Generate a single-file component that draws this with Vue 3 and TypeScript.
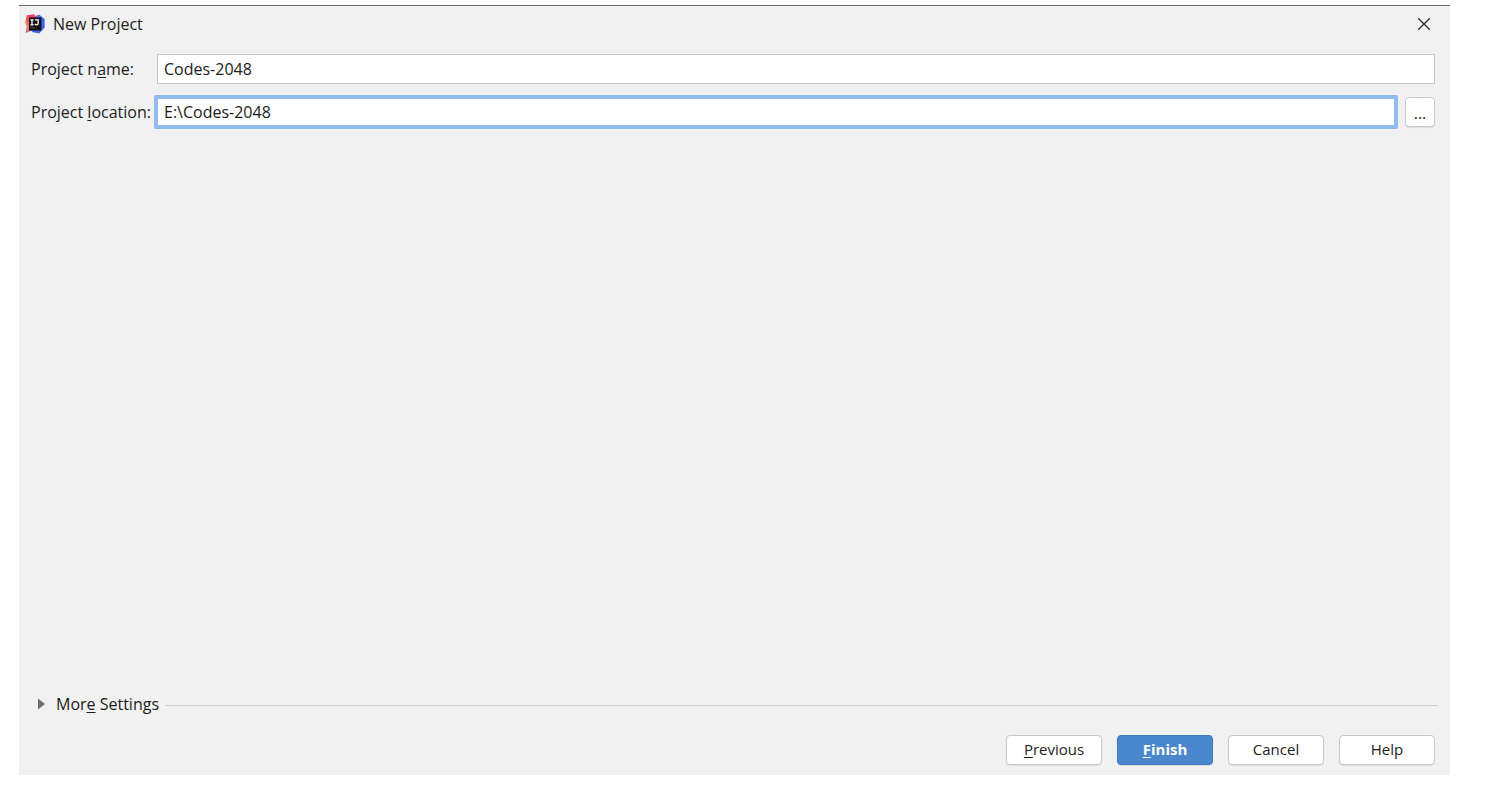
<script setup lang="ts">
import { ref } from 'vue'

const projectName = ref('Codes-2048')
const projectLocation = ref('E:\\Codes-2048')
</script>

<template>
  <div class="screen">
    <main class="dialog">
      <header class="titlebar">
        <svg class="logo" viewBox="0 0 20 20" aria-hidden="true">
          <defs>
            <linearGradient id="warm" x1="0" y1="1" x2="0.6" y2="0">
              <stop offset="0" stop-color="#a95be0" />
              <stop offset="0.35" stop-color="#f58a55" />
              <stop offset="0.6" stop-color="#f4555c" />
              <stop offset="1" stop-color="#fb3a66" />
            </linearGradient>
            <linearGradient id="cool" x1="0" y1="0" x2="1" y2="1">
              <stop offset="0" stop-color="#9a6ad8" />
              <stop offset="0.5" stop-color="#2f6cf0" />
              <stop offset="1" stop-color="#5a5ee8" />
            </linearGradient>
          </defs>
          <path d="M11 1.5 14.5 .8 19.6 5 19.8 13.5 14.2 19.6 7 18Z" fill="url(#cool)" />
          <path d="M1.8 1.2 9 .2 11.8 4 9.5 14 5.5 17.2.6 19 1.6 12.4.2 8.4Z" fill="url(#warm)" />
          <path d="M4 3.4h12.4v13.2H4z" fill="#111" />
          <path d="M5.4 5.8h3.2M7 5.8v5M5.4 10.8h3.2M10 5.8h3.2v3.4q0 1.6-1.5 1.6-1.1 0-1.9-1" fill="none" stroke="#fff" stroke-width="1.3" />
          <path d="M5.4 13.8H10" stroke="#555" stroke-width="1" />
        </svg>
        <h1>New Project</h1>
        <button class="close" type="button" aria-label="Close">
          <svg viewBox="0 0 14 14" aria-hidden="true">
            <path d="M1.2 1.2 12.8 12.8M12.8 1.2 1.2 12.8" fill="none" stroke="#303030" stroke-width="1.4" />
          </svg>
        </button>
      </header>

      <form class="form" @submit.prevent>
        <div class="fields">
          <label for="name">Project n<u>a</u>me:</label>
          <input id="name" v-model="projectName" type="text" spellcheck="false" />
          <label for="location">Project <u>l</u>ocation:</label>
          <div class="location">
            <input id="location" v-model="projectLocation" class="active" type="text" spellcheck="false" />
            <button class="browse" type="button" aria-label="Browse">...</button>
          </div>
        </div>

        <div class="more">
          <button class="toggle" type="button" aria-expanded="false">
            <svg viewBox="0 0 7 12" aria-hidden="true"><path d="M0 .5 7 6 0 11.5Z" fill="#6e6e6e" /></svg>
            <span>Mor<u>e</u> Settings</span>
          </button>
          <span class="rule"></span>
        </div>

        <footer class="actions">
          <button type="button"><u>P</u>revious</button>
          <button type="submit" class="primary"><u>F</u>inish</button>
          <button type="button">Cancel</button>
          <button type="button">Help</button>
        </footer>
      </form>
    </main>
  </div>
</template>

<style>
body {
  margin: 0;
  background: #fff;
}
</style>

<style scoped>
* {
  box-sizing: border-box;
}

.screen {
  display: flex;
  min-height: 100vh;
  padding: 5px 41px 19px 19px;
  font: 16px/20px "Open Sans", "Noto Sans", sans-serif;
  color: #1c1c1c;
}

.dialog {
  flex: 1;
  display: flex;
  flex-direction: column;
  border-top: 1px solid #6c6a6d;
  background: #f1f1f1;
}

.titlebar {
  display: flex;
  align-items: center;
  height: 36px;
  padding: 0 19px 0 6px;
}

.logo {
  width: 20px;
  height: 20px;
}

h1 {
  flex: 1;
  margin: 0 0 0 8px;
  font-size: 16px;
  font-weight: 400;
  line-height: 20px;
}

button,
input {
  font: inherit;
  color: inherit;
}

.close {
  display: flex;
  padding: 0;
  border: 0;
  background: none;
}

.close svg {
  width: 14px;
  height: 14px;
}

.form {
  flex: 1;
  display: flex;
  flex-direction: column;
  padding: 12px 12px 10px;
}

.fields {
  display: grid;
  grid-template-columns: 126px 1fr;
  row-gap: 11px;
  align-items: center;
  padding-right: 3px;
}

label {
  white-space: nowrap;
}

u {
  text-decoration-thickness: 1px;
  text-underline-offset: 2px;
  text-decoration-skip-ink: none;
}

input {
  min-width: 0;
  width: 100%;
  height: 30px;
  padding: 0 6px;
  border: 1px solid #c6c6c6;
  border-radius: 0;
  background: #fff;
  outline: none;
}

.location {
  display: flex;
  align-items: center;
  gap: 7px;
  margin-left: -3px;
}

.location .active {
  flex: 1;
  height: 34px;
  border: 4px solid #91bbee;
  border-radius: 2px;
}

.browse,
.actions button {
  height: 30px;
  border: 1px solid #c9c9c9;
  border-radius: 4px;
  background: #fff;
  box-shadow: 0 1px 1px #dedede;
}

.browse {
  width: 30px;
  padding: 2px 0 0;
}

.more {
  display: flex;
  align-items: center;
  gap: 6px;
  margin-top: auto;
  padding-left: 7px;
}

.toggle {
  display: flex;
  align-items: center;
  gap: 11px;
  padding: 0 0 2px;
  border: 0;
  background: none;
}

.toggle svg {
  width: 7px;
  height: 12px;
}

.rule {
  flex: 1;
  height: 1px;
  background: #d0d0d0;
}

.actions {
  display: flex;
  justify-content: flex-end;
  gap: 15px;
  margin-top: 19px;
  padding-right: 3px;
}

.actions button {
  width: 96px;
  padding: 0 0 2px;
  font-size: 15px;
}

.actions .primary {
  border-color: #3d79bf;
  background: #4a87cc;
  color: #fff;
  font-weight: 700;
}
</style>
